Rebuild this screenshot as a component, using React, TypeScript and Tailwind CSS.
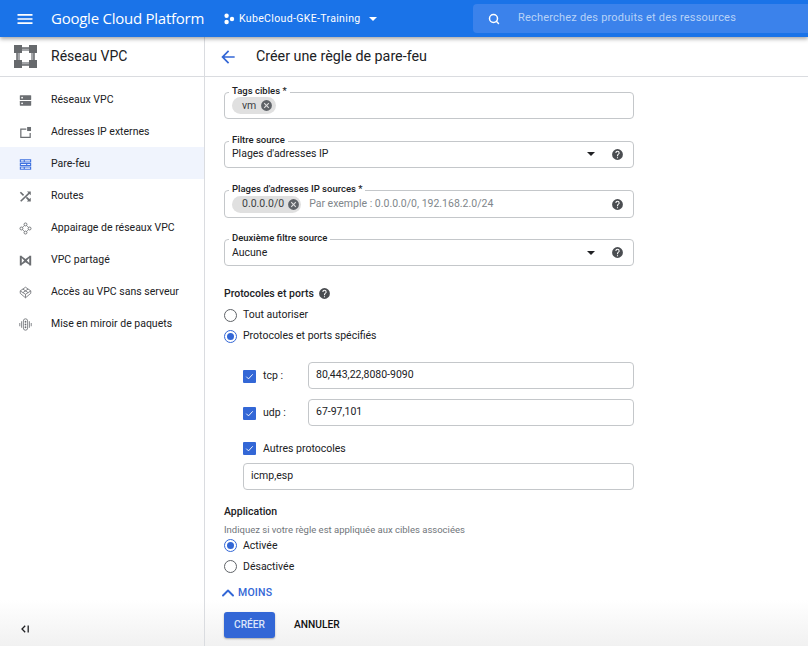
import { ReactNode } from 'react';
import { ChevronUp, Search } from 'lucide-react';

const navItems: { label: string; icon: ReactNode; active?: boolean }[] = [
  {
    label: 'Réseaux VPC',
    icon: (
      <>
        <rect x="1" y="1.5" width="14" height="6" rx="0.6" />
        <rect x="1" y="8.5" width="14" height="6" rx="0.6" />
        <circle cx="3.8" cy="4.5" r="1.1" fill="#fff" />
        <circle cx="3.8" cy="11.5" r="1.1" fill="#fff" />
      </>
    ),
  },
  {
    label: 'Adresses IP externes',
    icon: (
      <>
        <path d="M1.5 3h7.5v1.5H3v8.7h10V8.5h1.5v6.2h-13z" />
        <rect x="10" y="1.2" width="4.8" height="5" />
      </>
    ),
  },
  {
    label: 'Pare-feu',
    active: true,
    icon: (
      <path
        fillRule="evenodd"
        d="M1 1.5h14v4H1zM2.4 2.7v1.6h3.4V2.7zm4.8 0v1.6h6.4V2.7zM1 6.2h14v3.6H1zm1.4 1.1v1.4h6.4V7.3zm7.8 0v1.4h3.4V7.3zM1 10.5h14v4H1zm1.4 1.2v1.6h3.4v-1.6zm4.8 0v1.6h6.4v-1.6z"
      />
    ),
  },
  {
    label: 'Routes',
    icon: (
      <path d="M2.4 2 1 3.4l3.9 3.9 1.4-1.4zM9.8 1.8l1.7 1.7L1.4 13.2 2.8 14.6l10-9.7L14.5 6.6V1.8zM9.8 8.4 8.4 9.8l2.7 2.8-1.5 1.6h4.9V9.4l-1.7 1.7z" />
    ),
  },
  {
    label: 'Appairage de réseaux VPC',
    icon: (
      <>
        <circle cx="8" cy="3" r="1.8" fill="none" stroke="currentColor" strokeWidth="1.1" />
        <circle cx="3" cy="8" r="1.8" fill="none" stroke="currentColor" strokeWidth="1.1" />
        <circle cx="13" cy="8" r="1.8" fill="none" stroke="currentColor" strokeWidth="1.1" />
        <circle cx="8" cy="13" r="1.8" fill="none" stroke="currentColor" strokeWidth="1.1" />
        <path d="m4.3 6.7 2.4-2.4m2.6 0 2.4 2.4m0 2.6-2.4 2.4m-2.6 0L4.3 9.3" fill="none" stroke="currentColor" strokeWidth="0.9" />
      </>
    ),
  },
  {
    label: 'VPC partagé',
    icon: <path d="M1 2h2.4v.8L8 6l4.6-3.2V2H15v12h-2.4v-.8L8 10l-4.6 3.2v.8H1zm2.4 3v6l3-3zm9.2 0-3 3 3 3z" fillRule="evenodd" />,
  },
  {
    label: 'Accès au VPC sans serveur',
    icon: (
      <g fill="none" stroke="currentColor" strokeWidth="1">
        <path d="M8 1.5 14.5 6 8 10.2 1.5 6z" />
        <path d="M1.5 6v3L8 14.5 14.5 9V6" />
        <path d="M8 10.2v4.3M4.8 3.8l6.4 4.4M11.2 3.8 4.8 8.2" />
      </g>
    ),
  },
  {
    label: 'Mise en miroir de paquets',
    icon: (
      <>
        <path d="M.5 6h1v4h-1zM2.8 4h1v8h-1zM12.2 4h1v8h-1zM14.5 6h1v4h-1z" />
        <rect x="5.4" y="1" width="5.2" height="14" rx="2.6" fill="none" stroke="currentColor" strokeWidth="1" />
        <circle cx="8" cy="4.6" r="1.1" />
        <circle cx="8" cy="8" r="1.1" />
        <circle cx="8" cy="11.4" r="1.1" />
      </>
    ),
  },
];

const HelpIcon = ({ className = '' }: { className?: string }) => (
  <svg viewBox="0 0 24 24" className={`w-[13px] h-[13px] fill-[#4a4d51] shrink-0 ${className}`}>
    <path d="M12 2a10 10 0 1 0 0 20 10 10 0 0 0 0-20zm1 17h-2v-2h2v2zm2.07-7.75-.9.92C13.45 12.9 13 13.5 13 15h-2v-.5c0-1.1.45-2.1 1.17-2.83l1.24-1.26c.37-.36.59-.86.59-1.41a2 2 0 0 0-4 0H8a4 4 0 0 1 8 0c0 .88-.36 1.68-.93 2.25z" />
  </svg>
);

const ClearIcon = () => (
  <svg viewBox="0 0 24 24" className="w-[13px] h-[13px] fill-[#5f6368] shrink-0">
    <path d="M12 2a10 10 0 1 0 0 20 10 10 0 0 0 0-20zm5 13.6L15.6 17 12 13.4 8.4 17 7 15.6 10.6 12 7 8.4 8.4 7l3.6 3.6L15.6 7 17 8.4 13.4 12z" />
  </svg>
);

const Caret = () => <span className="w-0 h-0 border-x-[4.5px] border-x-transparent border-t-[4.5px] border-t-[#202124] shrink-0" />;

const Field = ({ label, className, children }: { label: string; className: string; children: ReactNode }) => (
  <div className={`relative flex items-center w-[410px] pl-[7px] pr-[9px] border border-[#c4c7ca] rounded-[4px] ${className}`}>
    <span className="absolute left-[4px] -top-[8px] bg-white px-[3px] text-[9.5px] leading-[12px] font-medium text-[#202124]">{label}</span>
    {children}
  </div>
);

const Chip = ({ label, className }: { label: string; className: string }) => (
  <span className={`flex items-center h-[17px] rounded-full bg-[#e0e0e0] text-[10.5px] text-[#3c4043] shrink-0 ${className}`}>
    {label}
    <ClearIcon />
  </span>
);

const Radio = ({ label, checked }: { label: string; checked?: boolean }) => (
  <div className="flex items-center h-[21px] gap-[6px]">
    <span className={`flex items-center justify-center w-[13px] h-[13px] rounded-full border ${checked ? 'border-[#3367d6]' : 'border-[#5f6368]'}`}>
      {checked && <span className="w-[7px] h-[7px] rounded-full bg-[#3367d6]" />}
    </span>
    <span className="text-[10.5px] text-[#202124]">{label}</span>
  </div>
);

const Check = () => (
  <span className="flex items-center justify-center w-[13px] h-[13px] rounded-[1px] bg-[#3367d6] shrink-0">
    <svg viewBox="0 0 12 12" className="w-[11px] h-[11px] fill-none stroke-white stroke-1">
      <path d="m2.5 6.2 2.4 2.4 4.6-5" />
    </svg>
  </span>
);

const PortInput = ({ value, className }: { value: string; className: string }) => (
  <div className={`flex items-center h-[27px] pl-[7px] border border-[#c4c7ca] rounded-[4px] text-[10.5px] text-[#202124] ${className}`}>
    {value}
  </div>
);

const PortRow = ({ label, value, className = '' }: { label: string; value: string; className?: string }) => (
  <div className={`flex items-center ${className}`}>
    <span className="flex items-center mt-[2px]">
      <Check />
      <span className="ml-[7px] w-[45px] text-[10.5px] text-[#202124]">{label}</span>
    </span>
    <PortInput value={value} className="flex-1" />
  </div>
);

export default function App() {
  return (
    <div className="flex flex-col w-[808px] h-[646px] overflow-hidden bg-white font-['Roboto',sans-serif]">
      {/* Top bar */}
      <header className="relative z-10 flex items-center h-[37px] bg-[#1a73e8] text-white shadow-[0_2px_4px_rgba(0,0,0,0.35)] shrink-0">
        <svg viewBox="0 0 24 24" className="w-[20px] h-[20px] ml-[15px] fill-white">
          <path d="M3 18h18v-2H3v2zm0-5h18v-2H3v2zm0-7v2h18V6H3z" />
        </svg>
        <span className="ml-[16px] w-[153px] text-[15px] whitespace-nowrap font-['Open_Sans',sans-serif] tracking-[-0.25px]">Google Cloud Platform</span>
        <svg viewBox="0 0 12 12" className="ml-[19px] w-[12px] h-[12px] fill-white">
          <circle cx="3.6" cy="2.8" r="2.2" />
          <circle cx="3.6" cy="9" r="2.2" />
          <circle cx="9" cy="6" r="2.2" />
        </svg>
        <span className="ml-[4px] text-[10.5px] tracking-[0.35px] whitespace-nowrap">KubeCloud-GKE-Training</span>
        <span className="ml-[8px] w-0 h-0 border-x-[4.5px] border-x-transparent border-t-[4.5px] border-t-white" />
        <div className="flex items-center ml-auto w-[335px] h-[29px] bg-[#3b82eb] rounded-l-[4px]">
          <Search className="w-[12px] h-[12px] ml-[15px]" strokeWidth={3} />
          <span className="ml-[18px] text-[11px] tracking-[0.2px] text-[#b8d2f8]">Recherchez des produits et des ressources</span>
        </div>
      </header>

      <div className="flex flex-1 min-h-0">
        {/* Sidebar */}
        <aside className="flex flex-col w-[205px] border-r border-[#dadce0] shrink-0">
          <div className="flex items-center h-[40px] border-b border-[#dadce0] shrink-0">
            <svg viewBox="0 0 23 23" className="w-[23px] h-[23px] ml-[14px]">
              <path d="M7 2h9v4H7zM7 17h9v4H7zM2 7h4v9H2zM17 7h4v9h-4z" fill="#a4a6a9" />
              <path d="M7 2.5h9v1.2H7zM7 19.3h9v1.2H7zM2.5 7h1.2v9H2.5zM19.3 7h1.2v9h-1.2z" fill="#707376" />
              <path d="M0 0h8v8H0zM15 0h8v8h-8zM0 15h8v8H0zM15 15h8v8h-8z" fill="#66696c" />
            </svg>
            <span className="ml-[14px] text-[14px] text-[#202124]">Réseau VPC</span>
          </div>
          <nav className="flex flex-col pt-[6px]">
            {navItems.map((item) => (
              <div key={item.label} className={`flex items-center h-[32px] pl-[19px] pt-[2px] ${item.active ? 'bg-[#f0f4fd]' : ''}`}>
                <svg
                  viewBox="0 0 16 16"
                  className={`w-[13px] h-[13px] fill-current ${item.active ? 'text-[#3f72e0]' : 'text-[#6b6e72]'}`}
                >
                  {item.icon}
                </svg>
                <span className="ml-[19px] text-[10.5px] text-[#202124]">{item.label}</span>
              </div>
            ))}
          </nav>
          <div className="flex items-start mt-auto h-[46px] pl-[21px] pt-[25px] bg-gradient-to-b from-white to-[#f1f1f1]">
            <svg viewBox="0 0 8 8" className="w-[8px] h-[8px] fill-none stroke-[#202124] stroke-[1.3]">
              <path d="M4.2.8 1 4l3.2 3.2M7.2.5v7" />
            </svg>
          </div>
        </aside>

        {/* Main column */}
        <main className="flex flex-col flex-1 min-w-0">
          <div className="flex items-center h-[40px] border-b border-[#dadce0] shrink-0">
            <svg viewBox="0 0 24 24" className="w-[20px] h-[20px] ml-[13px] fill-[#3367d6]">
              <path d="M20 11H7.83l5.59-5.59L12 4l-8 8 8 8 1.41-1.41L7.83 13H20v-2z" />
            </svg>
            <h1 className="ml-[18px] text-[14.3px] text-[#202124]">Créer une règle de pare-feu</h1>
          </div>

          <div className="flex flex-col flex-1 pl-[19px] pt-[15px]">
            <Field label="Tags cibles *" className="h-[27px] items-start pt-[4px] pl-[7px]">
              <Chip label="vm" className="pl-[10px] pr-[3px] gap-[4px]" />
            </Field>
            <Field label="Filtre source" className="h-[27px] mt-[22px] pb-[1px] text-[10.5px] text-[#202124]">
              Plages d'adresses IP
              <span className="ml-auto mr-[16px] flex"><Caret /></span>
              <HelpIcon />
            </Field>
            <Field label="Plages d'adresses IP sources *" className="h-[28px] mt-[22px]">
              <Chip label="0.0.0.0/0" className="pl-[10px] pr-[1px] gap-[3px]" />
              <span className="ml-[8px] text-[10.5px] text-[#80868b]">Par exemple : 0.0.0.0/0, 192.168.2.0/24</span>
              <HelpIcon className="ml-auto" />
            </Field>
            <Field label="Deuxième filtre source" className="h-[27px] mt-[21px] text-[10.5px] text-[#202124]">
              Aucune
              <span className="ml-auto mr-[16px] flex"><Caret /></span>
              <HelpIcon />
            </Field>

            <div className="flex items-center gap-[4px] mt-[20px] text-[10.5px] font-medium text-[#202124]">
              Protocoles et ports
              <HelpIcon />
            </div>
            <div className="flex flex-col mt-[3px]">
              <Radio label="Tout autoriser" />
              <Radio label="Protocoles et ports spécifiés" checked />
            </div>

            <div className="flex flex-col pl-[19px] mt-[15px] w-[410px]">
              <PortRow label="tcp :" value="80,443,22,8080-9090" />
              <PortRow label="udp :" value="67-97,101" className="mt-[10px]" />
              <div className="flex items-center mt-[15px]">
                <Check />
                <span className="ml-[7px] text-[10.5px] text-[#202124]">Autres protocoles</span>
              </div>
              <PortInput value="icmp,esp" className="mt-[6px]" />
            </div>

            <h2 className="mt-[14px] text-[10.5px] font-medium text-[#202124]">Application</h2>
            <p className="mt-[5px] text-[9.5px] leading-[12px] text-[#70757a]">Indiquez si votre règle est appliquée aux cibles associées</p>
            <div className="flex flex-col -mt-[1px]">
              <Radio label="Activée" checked />
              <Radio label="Désactivée" />
            </div>
            <div className="flex items-center mt-[6px] -ml-[6px] text-[10.5px] font-medium tracking-[0.2px] text-[#3367d6]">
              <ChevronUp className="w-[20px] h-[20px]" strokeWidth={2.3} />
              MOINS
            </div>
          </div>

          <div className="flex items-start gap-[19px] h-[46px] pl-[19px] pt-[12px] -mt-[46px] shrink-0 bg-gradient-to-b from-transparent to-[#f1f1f1]">
            <button className="w-[51px] h-[26px] rounded-[3px] bg-[#3367d6] text-[10.2px] font-medium text-[#dbe5fa] shadow-[0_1px_2px_rgba(0,0,0,0.3)]">CRÉER</button>
            <button className="h-[26px] text-[10.2px] font-medium text-[#111]">ANNULER</button>
          </div>
        </main>
      </div>
    </div>
  );
}
